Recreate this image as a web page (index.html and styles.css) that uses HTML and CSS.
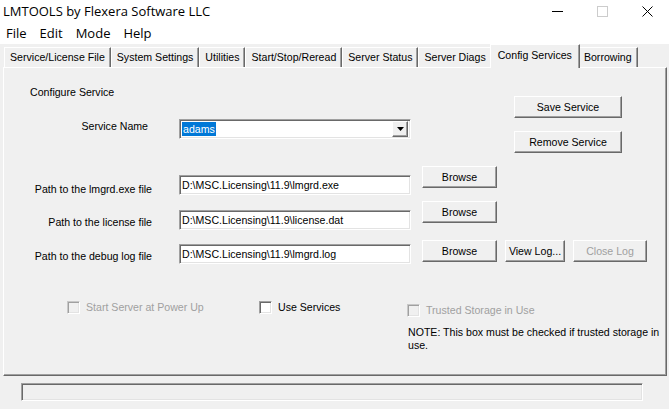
FILE: index.html
```html
<!DOCTYPE html>
<html>
<head>
<meta charset="utf-8">
<title>LMTOOLS</title>
<link rel="stylesheet" href="styles.css">
</head>
<body>
<div class="window">
  <div class="titlebar">
    <span class="title">LMTOOLS by Flexera Software LLC</span>
    <div class="caption">
      <svg class="cap" width="11" height="11" viewBox="0 0 11 11"><line x1="0" y1="5.5" x2="11" y2="5.5" stroke="#000" stroke-width="1"/></svg>
      <svg class="cap" width="11" height="11" viewBox="0 0 11 11"><rect x="0.5" y="0.5" width="10" height="10" fill="none" stroke="#cccccc" stroke-width="1"/></svg>
      <svg class="cap" width="11" height="11" viewBox="0 0 11 11"><path d="M0.5 0.5 L10.5 10.5 M10.5 0.5 L0.5 10.5" stroke="#000" stroke-width="1" fill="none"/></svg>
    </div>
  </div>
  <div class="menubar">
    <span class="menu">File</span>
    <span class="menu">Edit</span>
    <span class="menu">Mode</span>
    <span class="menu">Help</span>
  </div>
  <div class="tabs">
    <div class="tab">Service/License File</div>
    <div class="tab">System Settings</div>
    <div class="tab">Utilities</div>
    <div class="tab">Start/Stop/Reread</div>
    <div class="tab">Server Status</div>
    <div class="tab">Server Diags</div>
    <div class="tab active">Config Services</div>
    <div class="tab">Borrowing</div>
  </div>
  <div class="panel">
    <div class="top">
      <div class="top-left">
        <div class="heading">Configure Service</div>
        <div class="svc-row">
          <span class="svc-label">Service Name</span>
          <div class="combo">
            <span class="sel">adams</span>
            <span class="drop"><svg width="7" height="4" viewBox="0 0 7 4"><path d="M0 0 H7 L3.5 4 Z" fill="#000"/></svg></span>
          </div>
        </div>
      </div>
      <div class="top-right">
        <div class="btn btn-wide">Save Service</div>
        <div class="btn btn-wide btn-remove">Remove Service</div>
      </div>
    </div>

    <div class="pathrow row1">
      <span class="plabel">Path to the lmgrd.exe file</span>
      <div class="field">D:\MSC.Licensing\11.9\lmgrd.exe</div>
      <div class="btn btn-browse">Browse</div>
    </div>
    <div class="pathrow row2">
      <span class="plabel">Path to the license file</span>
      <div class="field">D:\MSC.Licensing\11.9\license.dat</div>
      <div class="btn btn-browse">Browse</div>
    </div>
    <div class="pathrow row3">
      <span class="plabel">Path to the debug log file</span>
      <div class="field">D:\MSC.Licensing\11.9\lmgrd.log</div>
      <div class="btn btn-browse">Browse</div>
      <div class="btn btn-view">View Log...</div>
      <div class="btn btn-close disabled">Close Log</div>
    </div>

    <div class="checks">
      <div class="chk chk-power disabled"><span class="box"></span><span>Start Server at Power Up</span></div>
      <div class="chk chk-services"><span class="box"></span><span>Use Services</span></div>
      <div class="trusted">
        <div class="chk disabled"><span class="box"></span><span>Trusted Storage in Use</span></div>
        <p class="note">NOTE: This box must be checked if trusted storage in use.</p>
      </div>
    </div>
  </div>
  <div class="statusbar">
    <div class="status-box"></div>
  </div>
</div>
</body>
</html>
```
FILE: styles.css
```css
* { box-sizing: border-box; }
html, body { margin: 0; padding: 0; }
body {
  width: 669px;
  height: 409px;
  overflow: hidden;
  background: #f0f0f0;
  font-family: "Liberation Sans", Arial, sans-serif;
  font-size: 10.6px;
  color: #000;
}
.window { display: flex; flex-direction: column; height: 409px; }

.titlebar {
  height: 22px;
  flex: none;
  background: #fff;
  display: flex;
  align-items: center;
  justify-content: space-between;
  font-family: "Open Sans", "Noto Sans", sans-serif;
  font-size: 13px;
}
.title { padding-left: 3px; line-height: 22px; }
.caption { display: flex; align-items: center; gap: 34px; margin-right: 16px; }
.cap { display: block; }

.menubar {
  height: 22px;
  flex: none;
  background: #fff;
  display: flex;
  align-items: center;
  gap: 13px;
  padding-left: 6px;
  font-family: "Open Sans", "Noto Sans", sans-serif;
  font-size: 13px;
}

.tabs {
  height: 23px;
  flex: none;
  display: flex;
  align-items: flex-end;
  padding-left: 4px;
}
.tab {
  height: 20px;
  padding: 0 5px;
  line-height: 18px;
  white-space: nowrap;
  border-top: 1px solid #fff;
  border-left: 1px solid #fff;
  border-right: 1px solid #696969;
  box-shadow: inset -1px 0 #a0a0a0;
}
.tab.active {
  height: 24px;
  margin: 0 -2px -1px;
  padding: 0 7px;
  line-height: 20px;
  position: relative;
  z-index: 1;
  background: #f0f0f0;
}

.panel {
  flex: none;
  height: 309px;
  margin: 0 2px 0 3px;
  border: 1px solid;
  border-color: #fff #696969 #696969 #fff;
  box-shadow: inset -1px -1px #a0a0a0;
}

.top { display: flex; height: 98px; }
.top-left { width: 407px; }
.heading { margin: 17px 0 0 26px; line-height: 14px; }
.svc-row { display: flex; margin-top: 20px; }
.svc-label { width: 144px; margin-right: 31px; text-align: right; line-height: 14px; }

.combo {
  width: 232px;
  height: 20px;
  background: #fff;
  border: 1px solid;
  border-color: #a0a0a0 #fff #fff #a0a0a0;
  box-shadow: inset 1px 1px #696969, inset -1px -1px #e3e3e3;
  display: flex;
  align-items: center;
  justify-content: space-between;
  padding: 2px;
}
.sel { background: #0078d7; color: #fff; line-height: 14px; padding: 0 1px; }
.drop {
  width: 16px;
  height: 16px;
  background: #f0f0f0;
  border: 1px solid;
  border-color: #fff #696969 #696969 #fff;
  box-shadow: inset -1px -1px #a0a0a0;
  display: flex;
  align-items: center;
  justify-content: center;
}
.drop svg { display: block; }

.top-right { margin-left: 103px; display: flex; flex-direction: column; }

.btn {
  height: 22px;
  line-height: 20px;
  text-align: center;
  background: #f0f0f0;
  border: 1px solid;
  border-color: #fff #696969 #696969 #fff;
  box-shadow: inset -1px -1px #a0a0a0;
  white-space: nowrap;
}
.btn-wide { width: 108px; }
.top-right .btn-wide:first-child { margin-top: 28px; }
.btn-remove { margin-top: 13px; }
.btn.disabled { color: #a0a0a0; }

.pathrow { display: flex; align-items: flex-start; }
.row1 { height: 35px; }
.row2 { height: 39px; }
.row3 { height: 24px; }
.plabel { width: 148px; margin-right: 27px; text-align: right; line-height: 14px; }
.row1 .plabel { margin-top: 16px; }
.row2 .plabel { margin-top: 14px; }
.row3 .plabel { margin-top: 9px; }

.field {
  width: 232px;
  height: 20px;
  background: #fff;
  border: 1px solid;
  border-color: #a0a0a0 #fff #fff #a0a0a0;
  box-shadow: inset 1px 1px #696969, inset -1px -1px #e3e3e3;
  padding: 0 2px;
  line-height: 18px;
  white-space: nowrap;
  overflow: hidden;
}
.row1 .field, .row2 .field { margin-top: 9px; }
.row3 .field { margin-top: 4px; }

.btn-browse { width: 75px; margin-left: 11px; }
.btn-view { width: 60px; margin-left: 8px; }
.btn-close { width: 74px; margin-left: 8px; }

.checks { display: flex; align-items: flex-start; margin-top: 37px; }
.chk { display: flex; align-items: center; gap: 6px; line-height: 13px; white-space: nowrap; }
.chk.disabled { color: #a0a0a0; }
.box {
  width: 13px;
  height: 13px;
  flex: none;
  background: #fff;
  border: 1px solid;
  border-color: #a0a0a0 #fff #fff #a0a0a0;
  box-shadow: inset 1px 1px #696969, inset -1px -1px #e3e3e3;
}
.chk.disabled .box {
  background: #f0f0f0;
  border-color: #c8c8c8 #fff #fff #c8c8c8;
  box-shadow: inset 1px 1px #a0a0a0, inset -1px -1px #e3e3e3;
}
.chk-power { width: 192px; margin-left: 63px; }
.chk-services { width: 148px; }
.trusted { width: 256px; padding-top: 3px; }
.note { margin: 9px 0 0 1px; line-height: 13px; }

.statusbar { flex: 1; padding: 7px 0 0 21px; }
.status-box {
  width: 622px;
  height: 18px;
  border: 1px solid;
  border-color: #a0a0a0 #fff #fff #a0a0a0;
  box-shadow: inset 1px 1px #696969, inset -1px -1px #e3e3e3;
}
```
